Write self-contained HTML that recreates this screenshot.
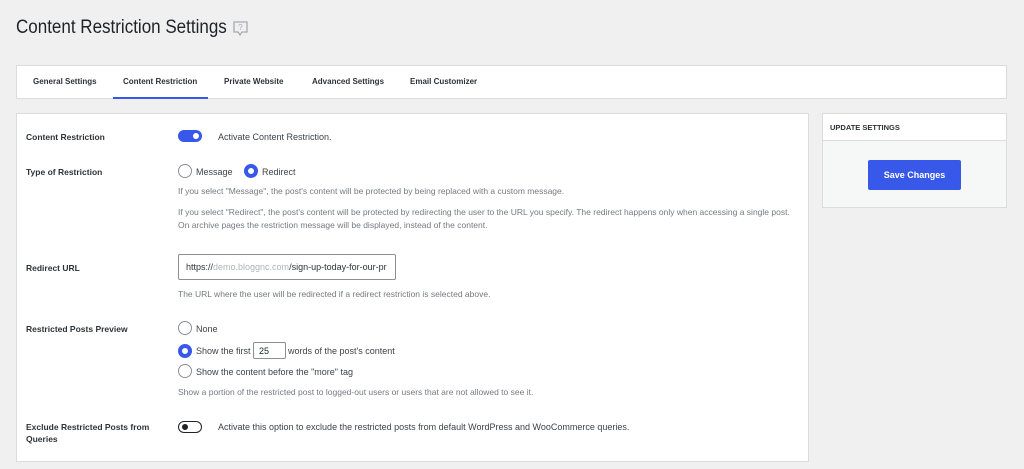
<!DOCTYPE html>
<html><head><style>
*{box-sizing:border-box;margin:0;padding:0}
body{width:1024px;height:469px;background:#f0f0f1;font-family:"Liberation Sans",sans-serif;color:#1d2327;position:relative;overflow:hidden}
.a{position:absolute;white-space:nowrap}
.lbl{font-size:8.5px;font-weight:bold;color:#2c3338}
.tab{font-size:8px;font-weight:bold;color:#2c3338}
.t{font-size:9px;color:#3c434a}
.d{font-size:8.5px;color:#757a80}
.radio{position:absolute;width:14px;height:14px;border-radius:50%;border:1px solid #8c8f94;background:#fff}
.radio.on{border:4px solid #3858e9}
</style></head><body>
<div class="a" style="left:16px;top:17px;font-size:19px;color:#1d2327;transform:scaleX(0.895);transform-origin:left">Content Restriction Settings</div>
<svg class="a" style="left:232px;top:20px" width="17" height="17" viewBox="0 0 17 17"><path d="M2 2h13v10H10l-2 3-2-3H2z" fill="none" stroke="#a7aaad" stroke-width="1.3"/><text x="8.5" y="10" font-size="8" text-anchor="middle" fill="#a7aaad" font-family="Liberation Sans">?</text></svg>

<div class="a" style="left:16px;top:65px;width:991px;height:34px;background:#fff;border:1px solid #dcdcde"></div>
<div class="a tab" style="left:33px;top:77px">General Settings</div>
<div class="a tab" style="left:123px;top:77px">Content Restriction</div>
<div class="a" style="left:113px;top:97px;width:95px;height:2px;background:#3858e9"></div>
<div class="a tab" style="left:224px;top:77px">Private Website</div>
<div class="a tab" style="left:312px;top:77px">Advanced Settings</div>
<div class="a tab" style="left:410px;top:77px">Email Customizer</div>

<div class="a" style="left:16px;top:113px;width:793px;height:349px;background:#fff;border:1px solid #dcdcde"></div>
<div class="a lbl" style="left:26px;top:132px">Content Restriction</div>
<div class="a" style="left:178px;top:130px;width:24px;height:12px;border-radius:6px;background:#3858e9"><div style="position:absolute;right:3px;top:3px;width:6px;height:6px;border-radius:50%;background:#fff"></div></div>
<div class="a t" style="left:218px;top:132px">Activate Content Restriction.</div>

<div class="a lbl" style="left:26px;top:167px">Type of Restriction</div>
<div class="radio" style="left:178px;top:164px"></div>
<div class="a t" style="left:196px;top:167px">Message</div>
<div class="radio on" style="left:244px;top:164px"></div>
<div class="a t" style="left:262px;top:167px">Redirect</div>
<div class="a d" style="left:178px;top:186px">If you select "Message", the post's content will be protected by being replaced with a custom message.</div>
<div class="a d" style="left:178px;top:207px">If you select "Redirect", the post's content will be protected by redirecting the user to the URL you specify. The redirect happens only when accessing a single post.</div>
<div class="a d" style="left:178px;top:220px">On archive pages the restriction message will be displayed, instead of the content.</div>

<div class="a lbl" style="left:26px;top:263px">Redirect URL</div>
<div class="a" style="left:178px;top:254px;width:218px;height:26px;border:1px solid #8c8f94;border-radius:2px;background:#fff;font-size:9px;color:#2c3338;padding:7px 7px;overflow:hidden">https://<span style="color:#b0b4b8">demo.bloggnc.com</span>/sign-up-today-for-our-pr</div>
<div class="a d" style="left:178px;top:289px">The URL where the user will be redirected if a redirect restriction is selected above.</div>

<div class="a lbl" style="left:26px;top:324px">Restricted Posts Preview</div>
<div class="radio" style="left:178px;top:321px"></div>
<div class="a t" style="left:196px;top:324px">None</div>
<div class="radio on" style="left:178px;top:344px"></div>
<div class="a t" style="left:196px;top:346px">Show the first</div>
<div class="a" style="left:253px;top:342px;width:33px;height:17px;border:1px solid #8c8f94;border-radius:2px;font-size:9px;padding:3px 5px">25</div>
<div class="a t" style="left:288px;top:346px">words of the post's content</div>
<div class="radio" style="left:178px;top:364px"></div>
<div class="a t" style="left:196px;top:367px">Show the content before the "more" tag</div>
<div class="a d" style="left:178px;top:387px">Show a portion of the restricted post to logged-out users or users that are not allowed to see it.</div>

<div class="a lbl" style="left:26px;top:422px">Exclude Restricted Posts from</div>
<div class="a lbl" style="left:26px;top:434px">Queries</div>
<div class="a" style="left:178px;top:421px;width:24px;height:12px;border-radius:6px;border:1px solid #1d2327;background:#fff"><div style="position:absolute;left:3px;top:2px;width:6px;height:6px;border-radius:50%;background:#1d2327"></div></div>
<div class="a t" style="left:218px;top:422px">Activate this option to exclude the restricted posts from default WordPress and WooCommerce queries.</div>

<div class="a" style="left:822px;top:113px;width:185px;height:95px;background:#f6f7f7;border:1px solid #dcdcde"></div>
<div class="a" style="left:823px;top:114px;width:183px;height:27px;background:#fff;border-bottom:1px solid #dcdcde"></div>
<div class="a" style="left:830px;top:123px;font-size:7.5px;font-weight:bold;color:#2c3338">UPDATE SETTINGS</div>
<div class="a" style="left:868px;top:160px;width:93px;height:30px;background:#3858e9;border-radius:2px;color:#fff;font-size:9px;font-weight:bold;text-align:center;line-height:30px">Save Changes</div>
</body></html>
